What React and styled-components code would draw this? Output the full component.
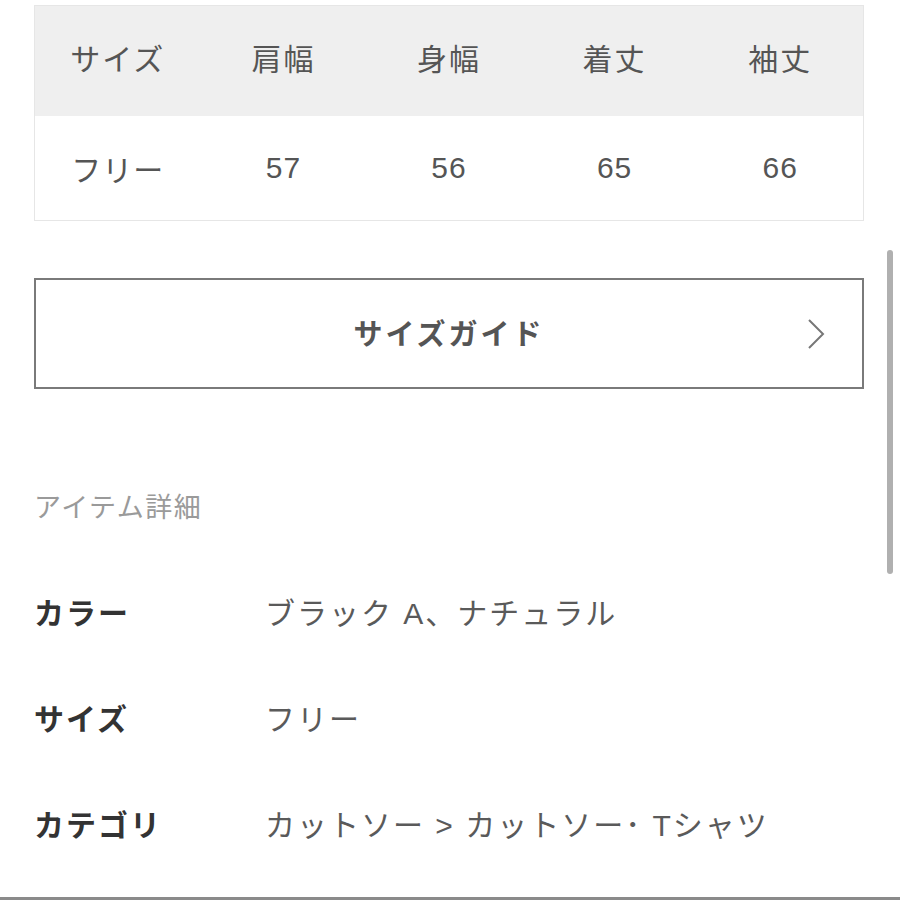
import React from "react";
import styled, { createGlobalStyle } from "styled-components";

const Global = createGlobalStyle`
  html, body { margin: 0; padding: 0; background: #fff; }
  body { font-family: "Liberation Sans", "Noto Sans CJK JP", sans-serif; }
`;

const Page = styled.div`
  position: relative;
  width: 900px;
  height: 900px;
  overflow: hidden;
  background: #fff;
  box-sizing: border-box;
  padding: 5px 0 0 34px;
`;

const Content = styled.div`
  width: 830px;
  display: flex;
  flex-direction: column;
`;

const Table = styled.div`
  display: grid;
  grid-template-columns: repeat(5, 1fr);
  border: 1px solid #e6e6e6;
  box-sizing: border-box;
`;

const Cell = styled.div`
  display: flex;
  align-items: center;
  justify-content: center;
  height: ${(p) => (p.$head ? "110px" : "104px")};
  background: ${(p) => (p.$head ? "#efefef" : "#fff")};
  color: #555;
  font-size: 30px;
  letter-spacing: ${(p) => (p.$head ? "2px" : "1px")};
  padding-bottom: ${(p) => (p.$head ? "8px" : "0")};
  box-sizing: border-box;
`;

const GuideButton = styled.div`
  margin-top: 57px;
  height: 111px;
  border: 2px solid #7a7a7a;
  box-sizing: border-box;
  display: flex;
  align-items: center;
  justify-content: center;
  position: relative;
  color: #555;
  font-size: 29px;
  font-weight: 700;
  letter-spacing: 3px;
  padding-bottom: 4px;
`;

const Chevron = styled.svg`
  position: absolute;
  right: 36px;
  top: 50%;
  transform: translateY(-50%);
`;

const SectionTitle = styled.div`
  margin-top: 100px;
  height: 38px;
  line-height: 38px;
  font-size: 27px;
  letter-spacing: 1.5px;
  color: #9a9a9a;
`;

const Rows = styled.div`
  margin-top: 62px;
  display: flex;
  flex-direction: column;
  gap: 68px;
`;

const Row = styled.div`
  display: grid;
  grid-template-columns: 231px 1fr;
  align-items: center;
  height: 38px;
  font-size: 30px;
`;

const Label = styled.div`
  font-weight: 700;
  color: #333;
  letter-spacing: 2px;
`;

const Value = styled.div`
  color: #5a5a5a;
  letter-spacing: 2px;
`;

const Scrollbar = styled.div`
  position: absolute;
  left: 887px;
  top: 250px;
  width: 6px;
  height: 324px;
  border-radius: 3px;
  background: #b0b0b0;
`;

const BottomLine = styled.div`
  position: absolute;
  left: 0;
  right: 0;
  bottom: 0;
  height: 3px;
  background: #8a8a8a;
`;

const headers = ["サイズ", "肩幅", "身幅", "着丈", "袖丈"];
const values = ["フリー", "57", "56", "65", "66"];
const details = [
  ["カラー", "ブラック A、ナチュラル"],
  ["サイズ", "フリー"],
  ["カテゴリ", "カットソー > カットソー･ Tシャツ"],
];

export default function App() {
  return (
    <>
      <Global />
      <Page>
        <Content>
          <Table>
            {headers.map((h) => (
              <Cell $head key={h}>{h}</Cell>
            ))}
            {values.map((v, i) => (
              <Cell key={i}>{v}</Cell>
            ))}
          </Table>
          <GuideButton>
            サイズガイド
            <Chevron width="20" height="32" viewBox="0 0 20 32">
              <path d="M3 2 L17 16 L3 30" fill="none" stroke="#777" strokeWidth="2" />
            </Chevron>
          </GuideButton>
          <SectionTitle>アイテム詳細</SectionTitle>
          <Rows>
            {details.map(([l, v]) => (
              <Row key={l}>
                <Label>{l}</Label>
                <Value>{v}</Value>
              </Row>
            ))}
          </Rows>
        </Content>
        <Scrollbar />
        <BottomLine />
      </Page>
    </>
  );
}
